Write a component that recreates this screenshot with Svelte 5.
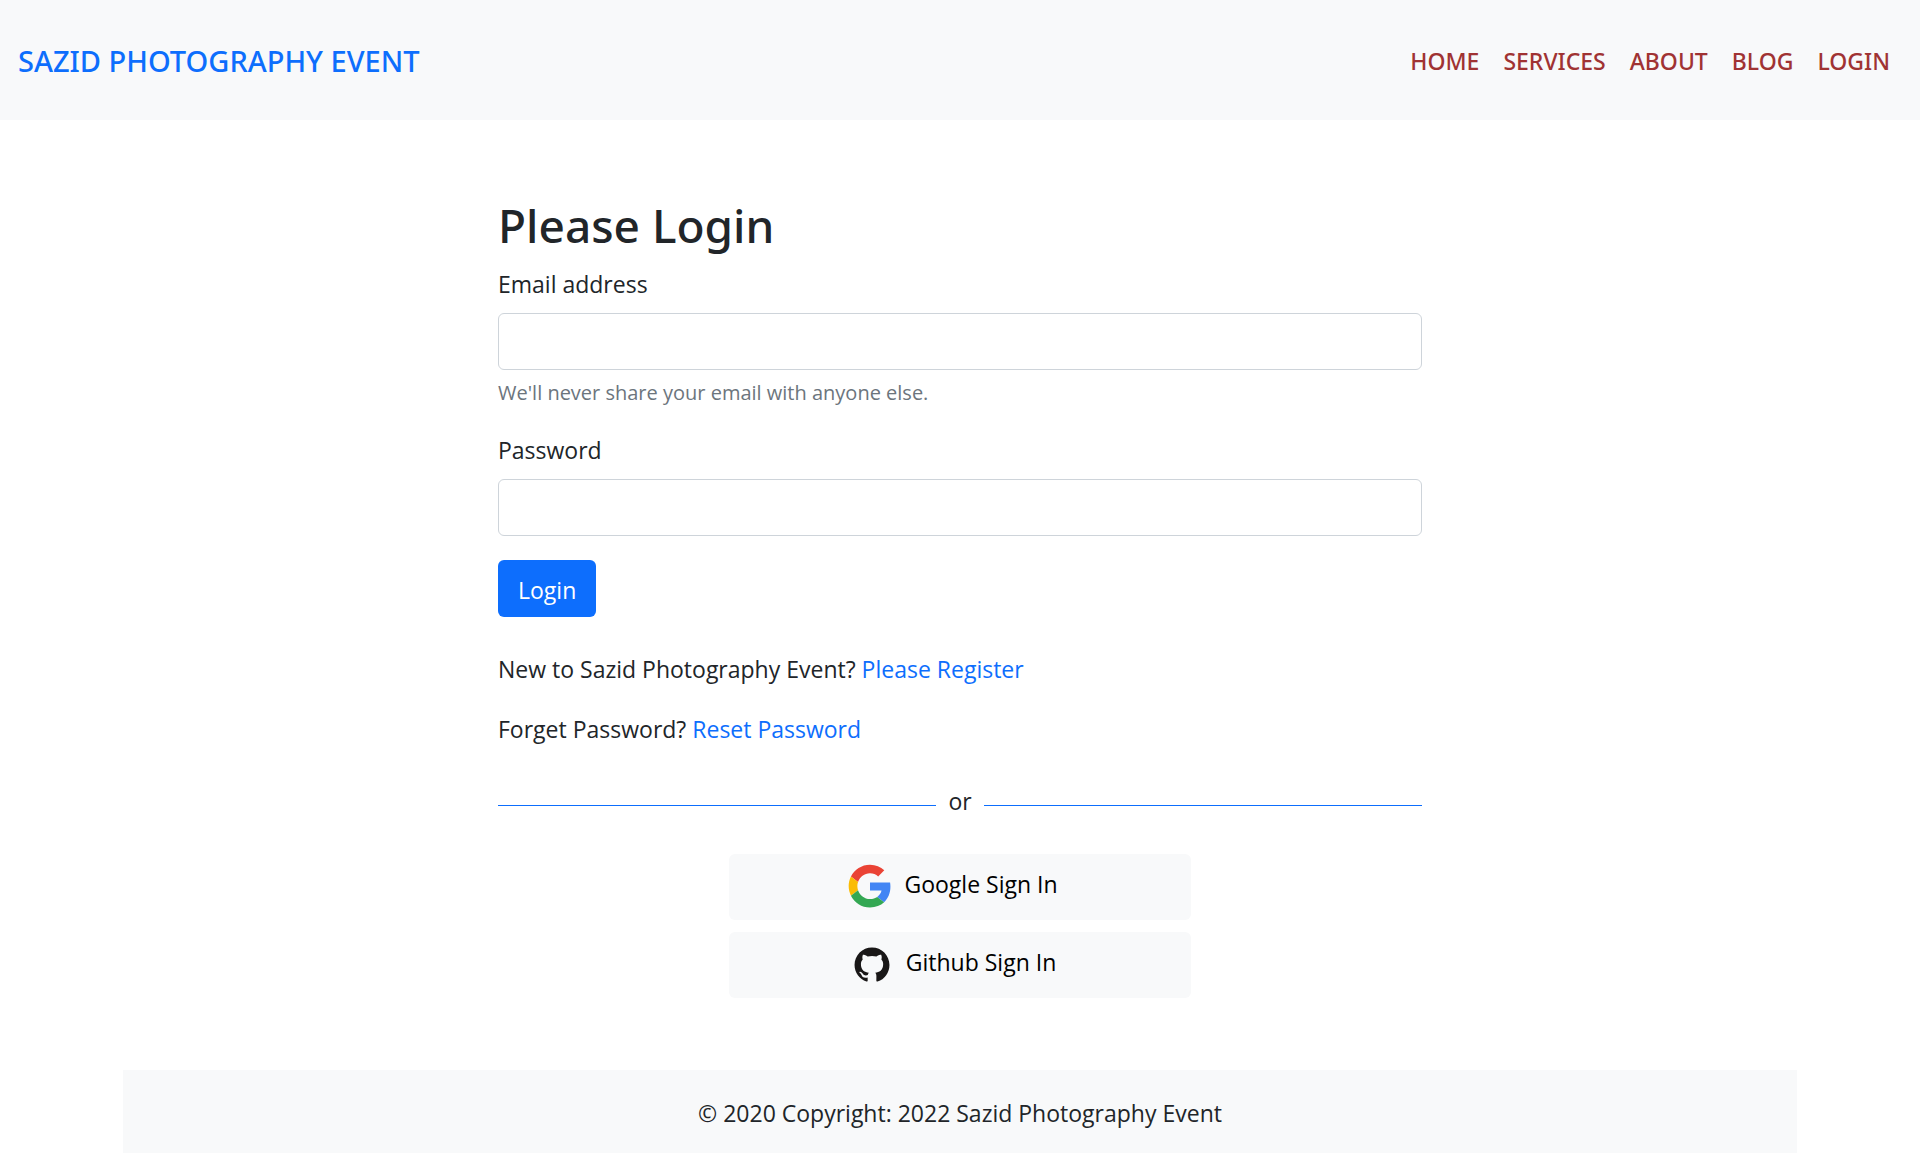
<script>
  const links = ['Home', 'Services', 'About', 'Blog', 'Login'];
  let email = $state('');
  let password = $state('');
</script>

<header class="navbar">
  <a class="brand" href="#home">SAZID PHOTOGRAPHY EVENT</a>
  <nav>
    {#each links as link}
      <a href="#{link.toLowerCase()}">{link.toUpperCase()}</a>
    {/each}
  </nav>
</header>

<main>
  <h1>Please Login</h1>
  <form onsubmit={(event) => event.preventDefault()}>
    <div class="field">
      <label for="email">Email address</label>
      <input id="email" type="email" aria-describedby="email-help" bind:value={email} />
      <small id="email-help">We'll never share your email with anyone else.</small>
    </div>
    <div class="field">
      <label for="password">Password</label>
      <input id="password" type="password" bind:value={password} />
    </div>
    <button class="submit" type="submit">Login</button>
  </form>

  <p>New to Sazid Photography Event? <a href="#register">Please Register</a></p>
  <p>Forget Password? <a href="#reset">Reset Password</a></p>

  <div class="divider"><span>or</span></div>

  <div class="social">
    <button type="button">
      <svg viewBox="-3 -2 54 54" aria-hidden="true">
        <path fill="#ea4335" d="M24 9.5c3.54 0 6.71 1.22 9.21 3.6l6.85-6.85C35.9 2.38 30.47 0 24 0 14.62 0 6.51 5.38 2.56 13.22l7.98 6.19C12.43 13.72 17.74 9.5 24 9.5z" />
        <path fill="#4285f4" d="M46.98 24.55c0-1.57-.15-3.09-.38-4.55H24v9.02h12.94c-.58 2.96-2.26 5.48-4.78 7.18l7.73 6c4.51-4.18 7.09-10.36 7.09-17.65z" />
        <path fill="#fbbc05" d="M10.53 28.59c-.48-1.45-.76-2.99-.76-4.59s.27-3.14.76-4.59l-7.98-6.19C.92 16.46 0 20.12 0 24c0 3.88.92 7.54 2.56 10.78l7.97-6.19z" />
        <path fill="#34a853" d="M24 48c6.48 0 11.93-2.13 15.89-5.81l-7.73-6c-2.15 1.45-4.92 2.3-8.16 2.3-6.26 0-11.57-4.22-13.47-9.91l-7.98 6.19C6.51 42.62 14.62 48 24 48z" />
      </svg>
      <span>Google Sign In</span>
    </button>
    <button type="button">
      <svg viewBox="-3 -3 22 22" aria-hidden="true">
        <path fill="#191717" d="M8 0C3.58 0 0 3.58 0 8c0 3.54 2.29 6.53 5.47 7.59.4.07.55-.17.55-.38 0-.19-.01-.82-.01-1.49-2.01.37-2.53-.49-2.69-.94-.09-.23-.48-.94-.82-1.13-.28-.15-.68-.52-.01-.53.63-.01 1.08.58 1.23.82.72 1.21 1.87.87 2.33.66.07-.52.28-.87.51-1.07-1.78-.2-3.64-.89-3.64-3.95 0-.87.31-1.59.82-2.15-.08-.2-.36-1.02.08-2.12 0 0 .67-.21 2.2.82.64-.18 1.32-.27 2-.27s1.36.09 2 .27c1.53-1.04 2.2-.82 2.2-.82.44 1.1.16 1.92.08 2.12.51.56.82 1.27.82 2.15 0 3.07-1.87 3.75-3.65 3.95.29.25.54.73.54 1.48 0 1.07-.01 1.93-.01 2.2 0 .21.15.46.55.38A8.01 8.01 0 0 0 16 8c0-4.42-3.58-8-8-8z" />
      </svg>
      <span>Github Sign In</span>
    </button>
  </div>
</main>

<footer>
  <div>© 2020 Copyright: 2022 Sazid Photography Event</div>
</footer>

<style>
  :global(body) {
    margin: 0;
    background: #fff;
    color: #212529;
    font: 23px/38px "Open Sans", "Noto Sans", sans-serif;
  }

  a {
    color: #0d6efd;
    text-decoration: none;
  }

  .navbar {
    display: flex;
    align-items: center;
    justify-content: space-between;
    padding: 37px 18px 35px;
    background: #f8f9fa;
    font-family: "Noto Sans", "Open Sans", sans-serif;
    font-weight: 500;
  }

  .brand {
    font-size: 29px;
    line-height: 48px;
  }

  nav {
    display: flex;
  }

  nav a {
    padding: 0 12px;
    color: #a03333;
  }

  main {
    box-sizing: border-box;
    width: calc(50% - 36px);
    margin: 0 auto;
    padding: 76px 0 72px;
  }

  h1 {
    margin: 0 0 11px;
    font-family: "Noto Sans", "Open Sans", sans-serif;
    font-size: 46px;
    line-height: 58px;
    font-weight: 500;
  }

  .field {
    display: flex;
    flex-direction: column;
    margin-bottom: 24px;
  }

  label {
    margin-bottom: 10px;
  }

  input {
    box-sizing: border-box;
    width: 100%;
    height: 57px;
    padding: 9px 18px;
    border: 1px solid #ced4da;
    border-radius: 6px;
    background: #fff;
    color: inherit;
    font: inherit;
  }

  small {
    margin-top: 8px;
    color: #6c757d;
    font-size: 20px;
    line-height: 29px;
  }

  button {
    border: 0;
    border-radius: 6px;
    font: inherit;
    cursor: pointer;
  }

  .submit {
    display: block;
    height: 57px;
    margin-bottom: 33px;
    padding: 2px 20px 0;
    background: #0d6efd;
    color: #fff;
  }

  p {
    margin: 0 0 22px;
  }

  .divider {
    display: flex;
    align-items: center;
    gap: 12px;
    margin: 34px 0;
  }

  .divider::before,
  .divider::after {
    content: "";
    flex: 1;
    height: 1px;
    margin-top: 8px;
    background: #0d6efd;
  }

  .social {
    display: flex;
    flex-direction: column;
    gap: 12px;
    width: 50%;
    margin: 0 auto;
  }

  .social button {
    display: flex;
    align-items: center;
    justify-content: center;
    gap: 10px;
    height: 66px;
    padding: 0 16px 0 0;
    background: #f8f9fa;
    color: #000;
  }

  .social svg {
    width: 48px;
    height: 48px;
  }

  .social span {
    padding-bottom: 6px;
  }

  footer {
    box-sizing: border-box;
    max-width: 1710px;
    margin: 0 auto;
    padding: 0 18px;
    text-align: center;
  }

  footer div {
    padding: 24px 24px 21px;
    background: #f8f9fa;
  }
</style>
